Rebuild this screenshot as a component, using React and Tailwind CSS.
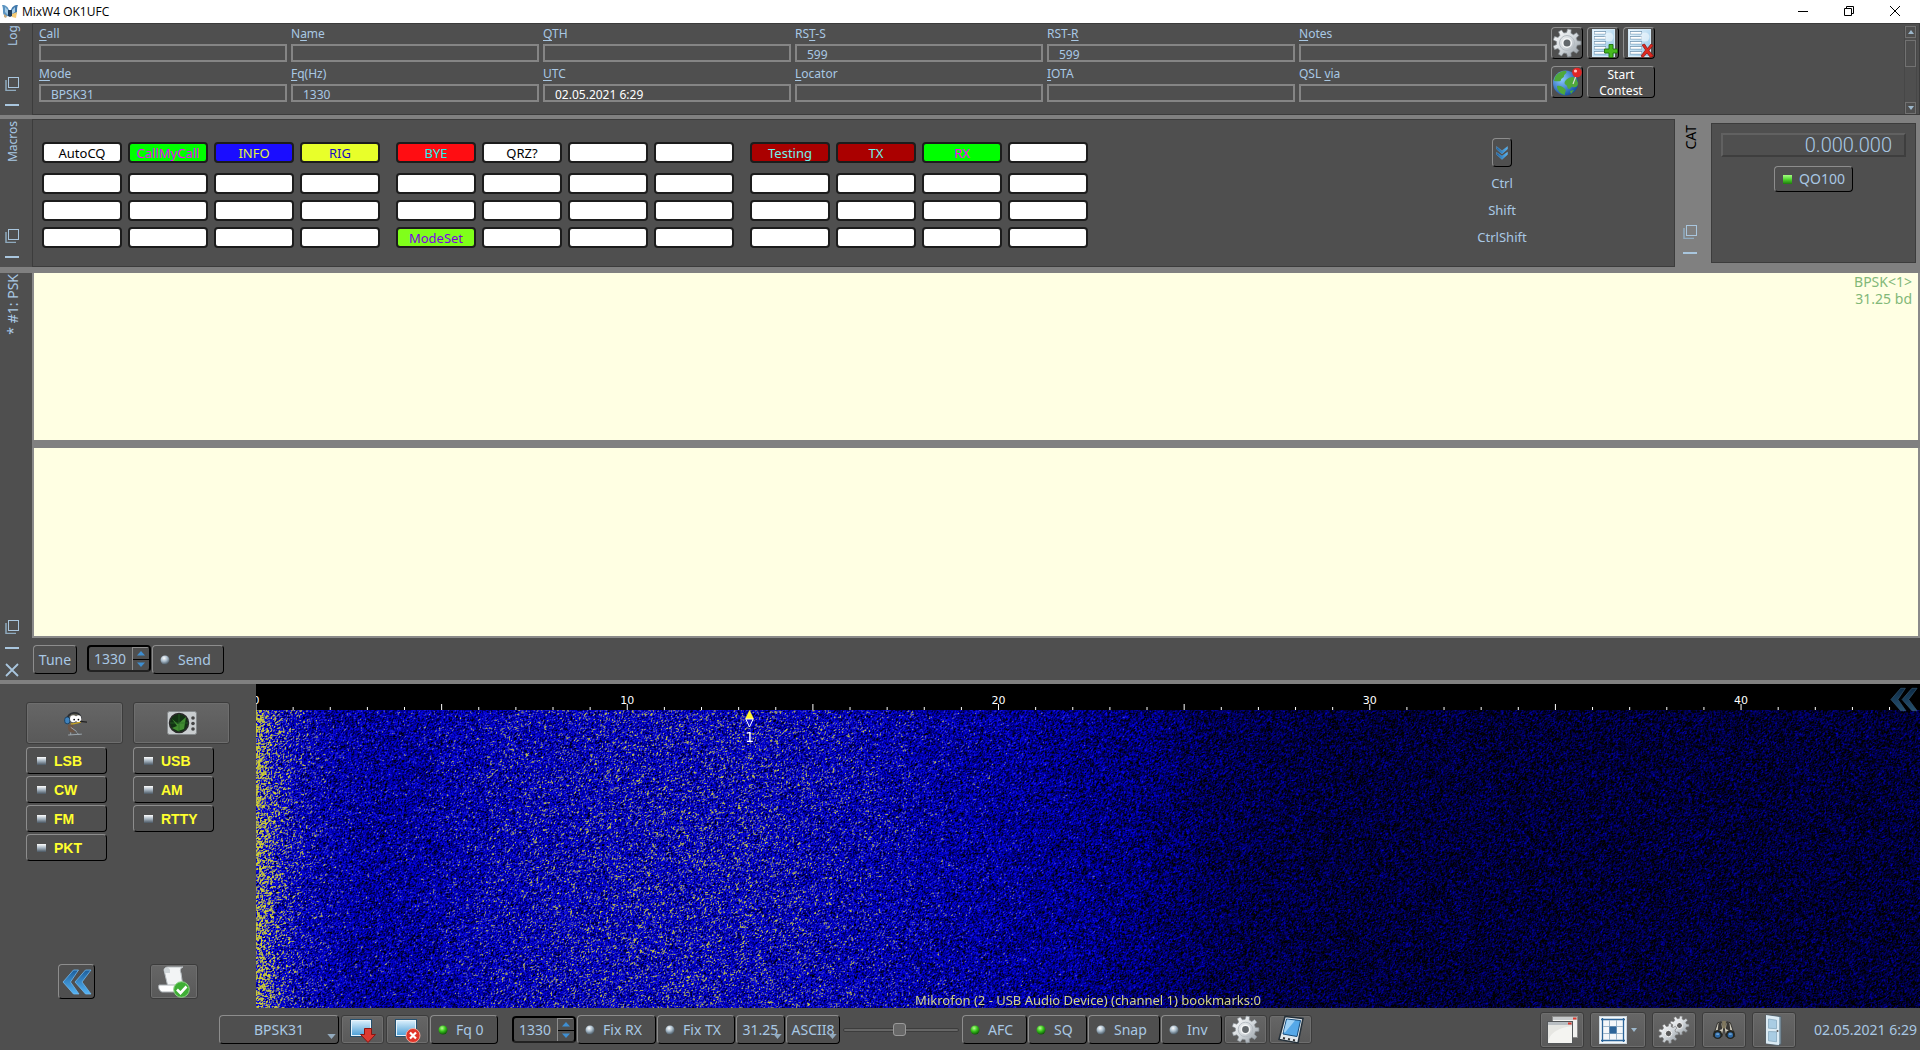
import React, { useEffect, useRef } from "react";

const raised =
  "rounded-[4px] border border-t-[#8d8d8d] border-l-[#8d8d8d] border-r-black border-b-black bg-[#4f4f4f]";
const flat =
  "rounded-[3px] border border-[#3c3c3c] bg-linear-to-b from-[#666666] to-[#595959] shadow-[inset_0_0_0_1px_#6e6e6e]";

/* ---------- icons ---------- */

function gearPath(cx, cy, outer, inner, teeth) {
  const pts = [];
  const step = (Math.PI * 2) / teeth;
  for (let i = 0; i < teeth; i++) {
    const a = i * step;
    [[-0.3, inner], [-0.18, outer], [0.18, outer], [0.3, inner]].forEach(([k, r]) => {
      const t = a + k * step;
      pts.push(`${(cx + r * Math.cos(t)).toFixed(2)} ${(cy + r * Math.sin(t)).toFixed(2)}`);
    });
  }
  return `M${pts.join("L")}Z`;
}

function Defs() {
  return (
    <svg className="absolute h-0 w-0" aria-hidden="true">
      <defs>
        <linearGradient id="steel" x1="0" y1="0" x2="1" y2="1">
          <stop offset="0" stopColor="#ffffff" />
          <stop offset="0.5" stopColor="#d5dade" />
          <stop offset="1" stopColor="#8c949b" />
        </linearGradient>
        <linearGradient id="sky" x1="0" y1="0" x2="0" y2="1">
          <stop offset="0" stopColor="#d9effc" />
          <stop offset="1" stopColor="#4c9fd6" />
        </linearGradient>
        <linearGradient id="sheet" x1="0" y1="0" x2="1" y2="1">
          <stop offset="0" stopColor="#eef8ff" />
          <stop offset="1" stopColor="#8fc4e6" />
        </linearGradient>
        <linearGradient id="blueArrow" x1="0" y1="0" x2="0" y2="1">
          <stop offset="0" stopColor="#1d5f9c" />
          <stop offset="1" stopColor="#55b4f5" />
        </linearGradient>
        <radialGradient id="globe" cx="0.35" cy="0.35" r="0.7">
          <stop offset="0" stopColor="#8ccbff" />
          <stop offset="1" stopColor="#134fa5" />
        </radialGradient>
        <radialGradient id="ledOn" cx="0.4" cy="0.3" r="0.7">
          <stop offset="0" stopColor="#b8ff90" />
          <stop offset="0.5" stopColor="#38c41c" />
          <stop offset="1" stopColor="#0f5a08" />
        </radialGradient>
        <radialGradient id="ledOff" cx="0.4" cy="0.3" r="0.7">
          <stop offset="0" stopColor="#ffffff" />
          <stop offset="0.5" stopColor="#a9bccb" />
          <stop offset="1" stopColor="#4b5964" />
        </radialGradient>
      </defs>
    </svg>
  );
}

function Gear({ className }) {
  return (
    <svg viewBox="0 0 30 30" className={className} aria-hidden="true">
      <path d={gearPath(15, 15, 14, 10.5, 9)} fill="url(#steel)" stroke="#8a9197" strokeWidth="0.7" />
      <circle cx="15" cy="15" r="7.5" fill="none" stroke="#b4bbc1" strokeWidth="1" />
      <circle cx="15" cy="15" r="4.3" fill="#63686c" stroke="#f5f7f8" strokeWidth="1.6" />
    </svg>
  );
}

function GearPair() {
  return (
    <svg viewBox="0 0 32 30" className="h-[30px] w-8" aria-hidden="true">
      <path d={gearPath(21.5, 10.5, 9.6, 7, 9)} fill="url(#steel)" stroke="#777" strokeWidth="0.6" />
      <circle cx="21.5" cy="10.5" r="3" fill="#5a5a5a" stroke="#fff" strokeWidth="1" />
      <path d={gearPath(10.5, 18.5, 10, 7.3, 9)} fill="url(#steel)" stroke="#777" strokeWidth="0.6" />
      <circle cx="10.5" cy="18.5" r="3.2" fill="#5a5a5a" stroke="#fff" strokeWidth="1" />
    </svg>
  );
}

function LogSheet({ mode }) {
  return (
    <svg viewBox="0 0 30 30" className="h-[30px] w-[30px]" aria-hidden="true">
      <rect x="4.5" y="1.5" width="22" height="27" fill="url(#sheet)" stroke="#d5e9f6" />
      {[3, 8, 13, 18, 23].map((y) => (
        <g key={y}>
          <rect x="6" y={y} width="12" height="3.4" fill="#6f93b0" />
          <rect x="6.5" y={y + 0.8} width="11" height="2" fill="#ffffff" />
        </g>
      ))}
      <circle cx="21" cy="9" r="4.500" fill="#ffffff" opacity="0.5" />
      {mode === "add" ? (
        <path d="M21 16.500h4v4.500h4.500v4H25v4.500h-4V25h-4.500v-4H21z" fill="#46b81e" stroke="#1f6f0c" strokeWidth="0.9" />
      ) : (
        <path d="M18 17l2.500-1 3 4.500 3.500-4.500 2 1.500-4 5 4.500 5.500-3 1.500-3.500-4.500-4 4.500-2-1.500 4.500-6z" fill="#dc2a20" stroke="#8d0f0a" strokeWidth="0.7" />
      )}
    </svg>
  );
}

function Globe() {
  return (
    <svg viewBox="0 0 30 30" className="h-[30px] w-[30px]" aria-hidden="true">
      <circle cx="13.500" cy="16" r="12.500" fill="url(#globe)" />
      <path d="M3 10c3-5 8-6.500 11-6 2 2-2 3-2 5s-3 2-3 4-4 1-7 1zM14 13c3-3 7-4 10-2l2 5c0 4-3 5-5 4s-2 2-4 2-1-3-3-4-2-3 0-5zM5 19c3-1 6 1 8 3s-1 4 0 6c-5-1-8-5-8-9zM18 24l4-1-3 4z" fill="#4fa83a" />
      <path d="M24 9l-3 8" stroke="#ddd" strokeWidth="1.2" />
      <circle cx="25" cy="5.500" r="4.800" fill="#e02626" />
      <circle cx="23.500" cy="4" r="1.600" fill="#ffc4c4" />
    </svg>
  );
}

function DoubleChevron({ dir = "left", className }) {
  return (
    <svg viewBox="0 0 30 26" className={`${className} ${dir === "down" ? "-rotate-90" : ""}`} aria-hidden="true">
      <path d="M11.500 1h5L8.500 13 17 25h-5.500L1 13z" fill="url(#blueArrow)" stroke="#6fb8ee" strokeWidth="0.8" />
      <path d="M23.500 1h5.500L20 13l9 12h-5.500L13 13z" fill="url(#blueArrow)" stroke="#6fb8ee" strokeWidth="0.8" />
    </svg>
  );
}

function FloatIcon() {
  return (
    <svg viewBox="0 0 14 14" className="h-3.5 w-3.5" fill="none" stroke="#a9c6de" aria-hidden="true">
      <rect x="3.5" y="0.5" width="10" height="10" />
      <path d="M1 3v10.500h10" strokeWidth="1.500" stroke="#8faabe" />
    </svg>
  );
}

function Duck() {
  return (
    <svg viewBox="0 0 28 32" className="h-[30px] w-6" aria-hidden="true">
      <path d="M5 12C5 3 20 1 21 11" fill="none" stroke="#2a2d31" strokeWidth="2.500" />
      <path d="M7 11c0-7 12-8 13-1z" fill="#5e5c50" />
      <rect x="2" y="9" width="6" height="8" rx="3" fill="#3f82bd" stroke="#143a5c" />
      <ellipse cx="12" cy="11" rx="3.800" ry="4" fill="#fff" />
      <ellipse cx="18" cy="11" rx="3.300" ry="4" fill="#fff" />
      <circle cx="13" cy="12" r="1" />
      <circle cx="18" cy="12" r="1" />
      <path d="M9 17c4 1 9-2 12-2" stroke="#c9a524" strokeWidth="1.500" fill="none" />
      <path d="M20 14l8 1" stroke="#222" strokeWidth="1.500" />
      <path d="M6 18c-1 3 0 7 3 9h6c-3-2-4-6-3-9z" fill="#6b5546" />
      <path d="M9 21l7 5M6 30l16-1M9 27v3M16 27l3 3" stroke="#9faab2" strokeWidth="1.100" fill="none" />
    </svg>
  );
}

function Scope() {
  return (
    <svg viewBox="0 0 30 24" className="h-6 w-[30px]" aria-hidden="true">
      <rect x="0.500" y="0.500" width="29" height="23" rx="2" fill="#c9cdcf" stroke="#85898b" />
      <ellipse cx="12" cy="12" rx="9.500" ry="9.500" fill="#123313" stroke="#2a2a2a" strokeWidth="1.500" />
      <path d="M5 8l6 5 8-7-2 12-6 2-6-3 5-2z" fill="#4ea33a" opacity="0.8" />
      <path d="M3 12h18M12 3v18" stroke="#2d6b2a" strokeWidth="0.700" />
      <circle cx="26" cy="7" r="1.800" fill="#444" />
      <circle cx="26" cy="12.500" r="1.800" fill="#444" />
      <circle cx="26" cy="18" r="1.800" fill="#444" />
    </svg>
  );
}

function ScriptOk() {
  return (
    <svg viewBox="0 0 32 32" className="h-8 w-8" aria-hidden="true">
      <path d="M6 4c0-2 2-3 4-3h15c-3 1-3 4-2 6l2 14H10z" fill="#f2f4f5" stroke="#b6bcc0" />
      <path d="M6 4c1-3 5-3 6 0v3H7z" fill="#cfd5d8" />
      <path d="M1 19h18c-2 2-2 5 1 7H4c-3-1-4-5-3-7z" fill="#fff" stroke="#a9afb3" />
      <circle cx="23.500" cy="23.500" r="7.800" fill="#3fae35" stroke="#8fd488" />
      <path d="M19 23.500l3.500 3.500 6-6.500" fill="none" stroke="#fff" strokeWidth="2.600" />
    </svg>
  );
}

function ScreenIcon({ kind }) {
  return (
    <svg viewBox="0 0 26 26" className="h-[26px] w-[26px]" aria-hidden="true">
      <rect x="1.500" y="3.500" width="19" height="15" fill="url(#sky)" stroke="#e8f3fa" />
      <rect x="0.500" y="2.500" width="21" height="17" fill="none" stroke="#24506f" />
      {kind === "down" ? (
        <path d="M14.500 11.500h7v6h4L18 25.500l-7.500-8h4z" fill="#dd3b32" stroke="#8c1410" />
      ) : (
        <>
          <circle cx="18" cy="18.500" r="7" fill="#e0352a" stroke="#ffb9a8" strokeWidth="0.800" />
          <path d="M15 15.500l6 6M21 15.500l-6 6" stroke="#fff" strokeWidth="2.200" />
        </>
      )}
    </svg>
  );
}

function Pda() {
  return (
    <svg viewBox="0 0 28 30" className="h-[30px] w-7" aria-hidden="true">
      <path d="M8 1.500l18 2-5 24.500-19-3.500z" fill="#e1e7eb" stroke="#24303a" strokeWidth="1.500" />
      <path d="M9.500 4l14 1.500-3.500 16-14-2.500z" fill="#56a8e8" stroke="#164b7a" />
      <path d="M10 4.500l8 1-10 12-1.500-.3z" fill="#bfe3fb" opacity="0.700" />
      <path d="M6 23l2 .4M11 24l2 .4M16 25l2 .4" stroke="#333" strokeWidth="2" />
    </svg>
  );
}

function Windows() {
  return (
    <svg viewBox="0 0 32 30" className="h-[30px] w-8" aria-hidden="true">
      <rect x="6.500" y="1.500" width="25" height="21" fill="#f1f1ef" stroke="#8b8b8b" />
      <rect x="7" y="2" width="24" height="3" fill="#c7cacc" />
      <rect x="27" y="2.500" width="3.500" height="2" fill="#dd3b2f" />
      <rect x="1.500" y="6.500" width="25" height="22" fill="#f4f4f1" stroke="#55585a" />
      <rect x="2" y="7" width="24" height="3" fill="#b9bec2" />
      <rect x="22" y="7.500" width="3.500" height="2" fill="#dd3b2f" />
      <path d="M2 28c1-9 8-15 24-17V10H2z" fill="#dcdcd8" opacity="0.600" />
    </svg>
  );
}

function GridIcon() {
  return (
    <svg viewBox="0 0 28 28" className="h-7 w-7" aria-hidden="true">
      <rect x="0.500" y="0.500" width="27" height="27" fill="#f3f7fa" stroke="#cdd7df" />
      <path d="M3.500 2v24M24.500 2v24M2 3.500h24M2 24.500h24" stroke="#2b6499" strokeWidth="1.300" />
      <path d="M10.500 4v20M17.500 4v20M4 10.500h20M4 17.500h20" stroke="#9db6ca" />
      <rect x="10.500" y="10.500" width="7" height="7" fill="#2b6499" />
    </svg>
  );
}

function Binoculars() {
  return (
    <svg viewBox="0 0 26 22" className="h-5 w-6" aria-hidden="true">
      <path d="M6 3l4-1 3 6-2 10H1z" fill="#cdc9bb" stroke="#2c2b28" />
      <path d="M20 3l-4-1-3 6 2 10h10z" fill="#cdc9bb" stroke="#2c2b28" />
      <path d="M7 3l3-1 1 8-5 2zM19 3l-3-1-1 8 5 2z" fill="#3a3835" />
      <rect x="11" y="1" width="4" height="8" fill="#81785f" />
      <circle cx="6" cy="16" r="5" fill="#23241f" />
      <circle cx="20" cy="16" r="5" fill="#23241f" />
      <circle cx="6" cy="16.500" r="3" fill="#2f6aa6" />
      <circle cx="20" cy="16.500" r="3" fill="#2f6aa6" />
      <path d="M4.500 15.500h3M18.500 15.500h3" stroke="#a5d3f5" />
    </svg>
  );
}

function Door() {
  return (
    <svg viewBox="0 0 20 32" className="h-8 w-5" aria-hidden="true">
      <path d="M2 1l15 1.500V30l-3 1.500L2 29.500z" fill="#8fa9b9" stroke="#55636d" />
      <path d="M2 1l13 2v28L2 29.500z" fill="#dcebf4" />
      <path d="M4.500 5l8 1.200v8.500l-8-.5zM4.500 17.500l8 .3v10l-8-1z" fill="#a9cce3" stroke="#7fa2b8" strokeWidth="0.700" />
      <circle cx="13.500" cy="17" r="1" fill="#555" />
    </svg>
  );
}

function Logo() {
  return (
    <svg viewBox="0 0 16 16" className="h-4 w-4" aria-hidden="true">
      <path d="M0 1c4 0 6 2 7 5l-1 6c-3 1-5-1-5-4 0-2 0-5-1-7z" fill="#5b93c0" />
      <path d="M16 1c-4 0-6 2-7 5l1 5c3 1 5-1 5-3 0-3 0-5 1-7z" fill="#3f78ab" />
      <path d="M3 3l3 3v5L3 8zM13 3l-3 3v4l3-2z" fill="#a5cbe6" />
      <path d="M6 6h4v6l-2 1-2-1z" fill="#1f3d5c" />
      <path d="M10 10l5-2-1 6-4-1z" fill="#f6cb74" />
      <path d="M2 10l3 2-1 2-2-1z" fill="#c9ab7d" />
    </svg>
  );
}

/* ---------- shared controls ---------- */

function Led({ on }) {
  return (
    <svg viewBox="0 0 10 10" className="h-2.5 w-2.5 shrink-0" aria-hidden="true">
      <circle cx="5" cy="5" r="4.500" fill={on ? "url(#ledOn)" : "url(#ledOff)"} />
    </svg>
  );
}

function LedButton({ on = false, className, children }) {
  return (
    <button type="button" aria-pressed={on} className={`${raised} flex h-[29px] items-center gap-2 pl-[7px] text-sm ${className}`}>
      <Led on={on} />
      <span className="whitespace-nowrap">{children}</span>
    </button>
  );
}

function IconButton({ label, className, children }) {
  return (
    <button type="button" aria-label={label} className={`${flat} flex shrink-0 items-center justify-center ${className}`}>
      {children}
    </button>
  );
}

function Spin({ label }) {
  return (
    <div className="flex h-[27px] w-16 shrink-0 overflow-hidden rounded-[4px] border-2 border-black border-b-[#222222] bg-[#4f4f4f]">
      <input aria-label={label} defaultValue="1330" className="w-0 grow bg-transparent pl-[5px] text-sm outline-none" />
      <div className="flex w-[17px] flex-col border-l border-[#8d8d8d]">
        <button type="button" aria-label={`${label} up`} className="flex flex-1 items-center justify-center border-t border-[#8d8d8d]">
          <svg viewBox="0 0 8 5" className="h-[5px] w-2"><path d="M4 0l4 4.500H0z" fill="#3f8fd2" /></svg>
        </button>
        <button type="button" aria-label={`${label} down`} className="flex flex-1 items-center justify-center border-t border-black">
          <svg viewBox="0 0 8 5" className="h-[5px] w-2"><path d="M4 5l4-4.500H0z" fill="#3f8fd2" /></svg>
        </button>
      </div>
    </div>
  );
}

function Arrow() {
  return <svg viewBox="0 0 10 6" className="pointer-events-none absolute right-0.5 bottom-1 h-[5px] w-[9px]"><path d="M0 0h10L5 6z" fill="#93aabd" /></svg>;
}

function ToolSelect({ label, value, className }) {
  return (
    <div className={`${raised} relative h-[29px] shrink-0 ${className}`}>
      <select aria-label={label} className="h-full w-full appearance-none bg-transparent text-center text-sm outline-none [text-align-last:center]">
        <option>{value}</option>
      </select>
      <Arrow />
    </div>
  );
}

function DockBar({ title, big = false, close = false, className = "w-8 pl-[5px]" }) {
  return (
    <div className={`flex shrink-0 flex-col items-start ${className}`}>
      <span className={`rotate-180 leading-4 whitespace-nowrap [writing-mode:vertical-rl] ${big ? "text-sm" : "text-xs"}`}>{title}</span>
      <button type="button" aria-label={`Float ${title}`} className="mt-auto"><FloatIcon /></button>
      <button type="button" aria-label={`Minimize ${title}`} className="mt-[7px] flex h-3.5 w-3.5 items-center">
        <span className="h-0.5 w-full bg-[#a9c6de]" />
      </button>
      {close && (
        <button type="button" aria-label={`Close ${title}`} className="mt-2">
          <svg viewBox="0 0 14 14" className="h-3.5 w-3.5" stroke="#a9c6de" strokeWidth="1.800"><path d="M1 1l12 12M13 1L1 13" /></svg>
        </button>
      )}
    </div>
  );
}

/* ---------- log ---------- */

const logFields = [
  ["", "C", "all", ""],
  ["N", "a", "me", ""],
  ["", "Q", "TH", ""],
  ["RS", "T", "-S", "599"],
  ["RST-", "R", "", "599"],
  ["", "N", "otes", ""],
  ["", "M", "ode", "BPSK31"],
  ["", "F", "q(Hz)", "1330"],
  ["", "U", "TC", "02.05.2021 6:29"],
  ["", "L", "ocator", ""],
  ["", "I", "OTA", ""],
  ["QSL ", "v", "ia", ""],
];

function LogPanel() {
  return (
    <section className="flex h-[92px] shrink-0">
      <DockBar title="Log" className="w-8 pt-0.5 pb-[3px] pl-[5px]" />
      <div className="flex min-w-0 grow border border-[#3c3c3c] pt-0.5 pl-1.5">
        <div className="grid min-w-0 grow grid-cols-6 content-start gap-x-1 gap-y-1">
          {logFields.map(([pre, key, post, value], i) => (
            <label key={i} className="block text-xs leading-4">
              <span className="block h-[18px]">{pre}<u className="underline-offset-2">{key}</u>{post}</span>
              <input
                defaultValue={value}
                className={`block h-[18px] w-full border-2 border-[#858585] bg-transparent pt-0.5 pl-2.5 leading-3 outline-none ${i === 8 ? "text-white" : ""}`}
              />
            </label>
          ))}
        </div>
        <div className="ml-1 grid w-[104px] shrink-0 grid-cols-3 content-start gap-x-1 gap-y-[7px] pt-px">
          <button type="button" aria-label="Log settings" className={`${raised} flex h-8 items-center justify-center`}><Gear className="h-[30px] w-[30px]" /></button>
          <button type="button" aria-label="Add record" className={`${raised} flex h-8 items-center justify-center`}><LogSheet mode="add" /></button>
          <button type="button" aria-label="Clear record" className={`${raised} flex h-8 items-center justify-center`}><LogSheet mode="clear" /></button>
          <button type="button" aria-label="Map" className={`${raised} flex h-8 items-center justify-center`}><Globe /></button>
          <button type="button" className={`${raised} col-span-2 h-8 text-xs leading-4 text-white`}>Start<br />Contest</button>
        </div>
        <div className="flex w-[264px] shrink-0 justify-end">
          <div className="mr-0.5 flex w-[13px] flex-col border-x border-[#474747]">
            <button type="button" aria-label="Scroll up" className="flex h-3 items-center justify-center border border-[#727272]">
              <svg viewBox="0 0 6 4" className="h-1 w-1.5"><path d="M0 4h6L3 0z" fill="#9db8cc" /></svg>
            </button>
            <div className="mt-0.5 h-[27px] border border-[#727272]" />
            <button type="button" aria-label="Scroll down" className="mt-auto flex h-3 items-center justify-center border border-[#727272]">
              <svg viewBox="0 0 6 4" className="h-1 w-1.5"><path d="M0 0h6L3 4z" fill="#9db8cc" /></svg>
            </button>
          </div>
        </div>
      </div>
    </section>
  );
}

/* ---------- macros ---------- */

const macroStyles = {
  AutoCQ: "bg-white text-black",
  CallMyCall: "bg-[#00ff00] text-[#f000ff]",
  INFO: "bg-[#1a0dff] text-[#e4f23c]",
  RIG: "bg-[#e8ff2a] text-[#1a0dc0]",
  BYE: "bg-[#ff0d12] text-[#20f4f0]",
  "QRZ?": "bg-white text-black",
  Testing: "bg-[#aa0000] text-[#6ff2ee]",
  TX: "bg-[#aa0000] text-[#6ff2ee]",
  RX: "bg-[#00ff00] text-[#ff00ff]",
  ModeSet: "bg-[#80ff1a] text-[#7a00e6]",
};

const macroRows = [
  ["AutoCQ", "CallMyCall", "INFO", "RIG", "BYE", "QRZ?", "", "", "Testing", "TX", "RX", ""],
  Array(12).fill(""),
  Array(12).fill(""),
  ["", "", "", "", "ModeSet", "", "", "", "", "", "", ""],
];

function MacroPanel() {
  return (
    <div className="flex min-w-0 grow border border-[#3c3c3c] bg-[#4f4f4f]">
      <div className="flex flex-col gap-1.5 pt-[22px] pl-[9px]">
        {macroRows.map((row, r) => (
          <div key={r} className={`flex gap-4 ${r === 0 ? "mb-1" : ""}`}>
            {[0, 4, 8].map((start) => (
              <div key={start} className="flex gap-1.5">
                {row.slice(start, start + 4).map((name, i) => (
                  <button
                    key={i}
                    type="button"
                    aria-label={name || `Macro ${r * 12 + start + i + 1}`}
                    className={`h-[21px] w-20 rounded-[4px] border-2 border-[#1c1c1c] text-[13px] leading-4 ${macroStyles[name] || "bg-white"}`}
                  >
                    {name}
                  </button>
                ))}
              </div>
            ))}
          </div>
        ))}
      </div>
      <div className="mr-[147px] ml-auto flex w-[50px] flex-col items-center pt-[18px] text-[13px]">
        <button type="button" aria-label="Expand macros" className={`${raised} flex h-[29px] w-5 items-center justify-center`}>
          <DoubleChevron dir="down" className="h-3 w-4" />
        </button>
        <span className="mt-[3px] leading-[27px]">Ctrl</span>
        <span className="leading-[27px]">Shift</span>
        <span className="leading-[27px]">CtrlShift</span>
      </div>
    </div>
  );
}

function CatPanel() {
  return (
    <div className="flex w-[245px] shrink-0 py-1 pr-1">
      <DockBar title="CAT" big className="w-9 pt-0.5 pb-[3px] pl-2 [&>span]:text-black" />
      <div className="flex grow flex-col items-center border border-[#3c3c3c] bg-[#4f4f4f] px-[9px] pt-[9px]">
        <output className="h-6 w-full border-2 border-[#3e3e3e] border-t-[#616161] border-l-[#616161] pr-3 text-right font-[Roboto] text-xl leading-5 font-light">0.000.000</output>
        <button type="button" aria-pressed="true" className={`${raised} mt-[9px] flex h-[26px] items-center gap-[7px] pr-[7px] pl-2 text-sm`}>
          <span className="h-[9px] w-[9px] bg-linear-to-b from-[#a4ff80] via-[#4ed42c] to-[#1f7a10]" />
          QO100
        </button>
      </div>
    </div>
  );
}

/* ---------- channel ---------- */

function ChannelPanel() {
  return (
    <section className="flex shrink-0">
      <DockBar title="* #1: PSK" big close className="w-8 pt-px pb-[3px] pl-[5px]" />
      <div className="min-w-0 grow">
        <div className="relative border-x-2 border-[#8a8a8a]">
          <textarea aria-label="Received text" className="block h-[167px] w-full resize-none bg-[#ffffe3] p-1 text-sm text-black outline-none" />
          <div className="pointer-events-none absolute top-0 right-1.5 text-right text-sm leading-[17px] text-[#82b878]">
            <div>BPSK&lt;1&gt;</div>
            <div>31.25 bd</div>
          </div>
        </div>
        <div className="h-2 bg-[#808080]" />
        <div className="border-x-2 border-b-2 border-[#8a8a8a]">
          <textarea aria-label="Transmit text" className="block h-[188px] w-full resize-none bg-[#ffffe3] p-1 text-sm text-black outline-none" />
        </div>
        <div className="flex pt-[7px] pb-1.5 pl-px">
          <button type="button" className={`${raised} mr-2.5 h-[29px] w-11 text-sm`}>Tune</button>
          <Spin label="Channel frequency" />
          <LedButton className="ml-px w-[72px]">Send</LedButton>
        </div>
      </div>
    </section>
  );
}

/* ---------- waterfall ---------- */

const SPAN_HZ = 44.82;

function lerp(stops, x) {
  for (let i = 1; i < stops.length; i++) {
    if (x <= stops[i][0]) {
      const [x0, y0] = stops[i - 1];
      const [x1, y1] = stops[i];
      return y0 + ((y1 - y0) * (x - x0)) / (x1 - x0);
    }
  }
  return stops[stops.length - 1][1];
}

const level = [
  [0, 0.86], [0.006, 0.72], [0.013, 0.6], [0.03, 0.48], [0.06, 0.39], [0.1, 0.4], [0.15, 0.48],
  [0.22, 0.52], [0.3, 0.52], [0.36, 0.47], [0.42, 0.4], [0.47, 0.35], [0.53, 0.28], [0.58, 0.2],
  [0.65, 0.15], [1, 0.14],
];
const palette = [[0, [0, 0, 0]], [0.2, [0, 0, 75]], [0.5, [0, 0, 205]], [0.62, [15, 15, 220]], [0.75, [100, 100, 135]], [0.9, [170, 170, 85]], [1.1, [205, 205, 50]]];
const channels = [0, 1, 2].map((c) => palette.map(([v, rgb]) => [v, rgb[c]]));

function paint(canvas) {
  const w = canvas.clientWidth;
  const h = canvas.clientHeight;
  if (!w || !h) return;
  canvas.width = w;
  canvas.height = h;
  const ctx = canvas.getContext("2d");
  const img = ctx.createImageData(w, h);
  const lut = Array.from({ length: 221 }, (_, i) => channels.map((c) => lerp(c, i / 200)));
  const mus = Array.from({ length: w }, (_, x) => lerp(level, x / w));
  const above = new Float32Array(w);
  let seed = 20210502;
  const rnd = () => {
    seed = (seed * 1664525 + 1013904223) >>> 0;
    return seed / 4294967296;
  };
  for (let y = 0; y < h; y++) {
    let prev = 0;
    for (let x = 0; x < w; x++) {
      const g = (rnd() + rnd() + rnd() - 1.5) * 2;
      const n = 0.72 * g + 0.45 * prev + 0.45 * above[x];
      prev = g;
      above[x] = g;
      const mu = mus[x];
      const v = mu + n * (0.07 + 0.22 * mu);
      const c = lut[Math.max(0, Math.min(220, Math.round(v * 200)))];
      const p = (y * w + x) * 4;
      img.data[p] = c[0];
      img.data[p + 1] = c[1];
      img.data[p + 2] = c[2];
      img.data[p + 3] = 255;
    }
  }
  ctx.putImageData(img, 0, 0);
}

function Waterfall() {
  const ref = useRef(null);
  useEffect(() => {
    const canvas = ref.current;
    paint(canvas);
    const ro = new ResizeObserver(() => paint(canvas));
    ro.observe(canvas);
    return () => ro.disconnect();
  }, []);
  const ticks = Array.from({ length: 45 }, (_, i) => i);
  return (
    <div className="relative flex min-w-0 grow flex-col bg-black">
      <svg className="h-[26px] w-full shrink-0" role="img" aria-label="Frequency scale">
        {ticks.map((t) => {
          const x = `${(t / SPAN_HZ) * 100}%`;
          return <line key={t} x1={x} x2={x} y1={t % 5 ? 23 : 20} y2="26" stroke="#fff" />;
        })}
        {[0, 10, 20, 30, 40].map((t) => (
          <text key={t} x={`${(t / SPAN_HZ) * 100}%`} y="20" textAnchor="middle" fill="#fff" fontSize="11" fontFamily="DejaVu Sans">{t}</text>
        ))}
      </svg>
      <div className="relative min-h-[298px] grow">
        <canvas ref={ref} className="absolute inset-0 h-full w-full" />
        <div className="absolute top-0 left-[29.67%] flex w-4 -translate-x-1/2 flex-col items-center text-white">
          <svg viewBox="0 0 9 18" className="h-[18px] w-[9px]">
            <path d="M4.500 0L9 9H0z" fill="#fff22e" />
            <path d="M0.800 9h7.400L4.500 17z" fill="#1616c8" stroke="#fff" />
          </svg>
          <span className="mt-[3px] font-['DejaVu_Sans'] text-sm leading-3">1</span>
        </div>
        <div className="absolute inset-x-0 bottom-0 text-center text-[13px] leading-4 text-[#d4d488]">
          Mikrofon (2 - USB Audio Device) (channel 1) bookmarks:0
        </div>
      </div>
      <button type="button" aria-label="Collapse spectrum" className="absolute top-0.5 right-0.5 opacity-45">
        <DoubleChevron className="h-[27px] w-7" />
      </button>
    </div>
  );
}

function ModeButton({ children }) {
  return (
    <button type="button" className={`${raised} flex h-[27px] w-[81px] items-center gap-2 pl-2.5 font-['Liberation_Sans'] text-sm font-bold text-[#ffff2e]`}>
      <span className="h-2 w-[9px] bg-linear-to-b from-[#ffffff] via-[#a5b3bf] to-[#4a5661]" />
      {children}
    </button>
  );
}

function RigPanel() {
  return (
    <div className="flex w-64 shrink-0 flex-col pt-[18px] pb-[9px] pl-[26px]">
      <div className="flex gap-2.5">
        {[["Voice", <Duck key="d" />, ["LSB", "CW", "FM", "PKT"]], ["Spectrum", <Scope key="s" />, ["USB", "AM", "RTTY"]]].map(([label, icon, modes]) => (
          <div key={label} className="flex w-[97px] flex-col gap-0.5">
            <IconButton label={label} className="mb-px h-[42px] w-full">{icon}</IconButton>
            {modes.map((m) => <ModeButton key={m}>{m}</ModeButton>)}
          </div>
        ))}
      </div>
      <div className="mt-auto flex gap-[55px] pl-8">
        <button type="button" aria-label="Hide panel" className={`${raised} flex h-[35px] w-[37px] items-center justify-center`}>
          <DoubleChevron className="h-7 w-[30px]" />
        </button>
        <IconButton label="Apply script" className="h-[35px] w-12"><ScriptOk /></IconButton>
      </div>
    </div>
  );
}

/* ---------- bottom toolbar ---------- */

function Toolbar() {
  return (
    <footer className="flex h-[42px] shrink-0 items-center pt-px pl-[219px]">
      <ToolSelect label="Mode" value="BPSK31" className="w-[120px]" />
      <IconButton label="Receive screen" className="ml-0.5 h-[29px] w-[43px]"><ScreenIcon kind="down" /></IconButton>
      <IconButton label="Close screen" className="ml-0.5 h-[29px] w-[43px]"><ScreenIcon kind="close" /></IconButton>
      <LedButton on className="ml-px w-[68px]">Fq 0</LedButton>
      <div className="ml-3.5 shrink-0"><Spin label="Frequency" /></div>
      <LedButton className="ml-px w-[79px]">Fix RX</LedButton>
      <LedButton className="ml-px w-[78px]">Fix TX</LedButton>
      <ToolSelect label="Speed" value="31.25" className="ml-px w-[49px]" />
      <ToolSelect label="Charset" value="ASCII8" className="ml-px w-[54px]" />
      <input
        type="range"
        aria-label="Squelch level"
        defaultValue="49"
        className="mx-[3px] h-4 w-[116px] appearance-none bg-transparent [&::-webkit-slider-runnable-track]:h-1 [&::-webkit-slider-runnable-track]:rounded-sm [&::-webkit-slider-runnable-track]:border [&::-webkit-slider-runnable-track]:border-[#3c3c3c] [&::-webkit-slider-runnable-track]:bg-[#666666] [&::-webkit-slider-thumb]:-mt-[6px] [&::-webkit-slider-thumb]:h-[13px] [&::-webkit-slider-thumb]:w-[13px] [&::-webkit-slider-thumb]:appearance-none [&::-webkit-slider-thumb]:rounded-[3px] [&::-webkit-slider-thumb]:border [&::-webkit-slider-thumb]:border-[#9a9a9a] [&::-webkit-slider-thumb]:bg-[#686868]"
      />
      <LedButton on className="w-[65px]">AFC</LedButton>
      <LedButton on className="ml-px w-[59px]">SQ</LedButton>
      <LedButton className="ml-px w-[72px]">Snap</LedButton>
      <LedButton className="ml-px w-[61px]">Inv</LedButton>
      <IconButton label="Settings" className="ml-0.5 h-[29px] w-[43px]"><Gear className="h-[29px] w-[29px]" /></IconButton>
      <IconButton label="Device" className="ml-0.5 h-[29px] w-[43px]"><Pda /></IconButton>
      <div className="ml-auto flex items-center gap-1.5">
        <IconButton label="Windows" className="h-9 w-11"><Windows /></IconButton>
        <IconButton label="Layout" className="h-9 w-14 gap-1">
          <GridIcon />
          <svg viewBox="0 0 6 4" className="h-1 w-1.5"><path d="M0 0h6L3 4z" fill="#9db8cc" /></svg>
        </IconButton>
        <IconButton label="Configuration" className="h-9 w-11"><GearPair /></IconButton>
        <IconButton label="Search" className="h-9 w-11"><Binoculars /></IconButton>
        <IconButton label="Exit" className="h-9 w-11"><Door /></IconButton>
        <time className="ml-3 w-[106px] text-sm whitespace-nowrap">02.05.2021 6:29</time>
      </div>
    </footer>
  );
}

export default function App() {
  return (
    <div className="flex min-h-screen flex-col bg-[#4f4f4f] font-['Noto_Sans',sans-serif] text-[#a9c8e4]">
      <Defs />
      <header className="flex h-[23px] shrink-0 items-center bg-white pl-0.5 font-['Open_Sans'] text-xs text-black">
        <Logo />
        <h1 className="ml-1">MixW4 OK1UFC</h1>
        <div className="mr-0.5 ml-auto flex pb-0.5">
          <button type="button" aria-label="Minimize" className="flex w-[46px] justify-center">
            <svg viewBox="0 0 10 10" className="h-2.5 w-2.5" stroke="#000"><path d="M0 5.500h10" /></svg>
          </button>
          <button type="button" aria-label="Restore" className="flex w-[46px] justify-center">
            <svg viewBox="0 0 10 10" className="h-2.5 w-2.5" stroke="#000" fill="none"><path d="M0.500 2.500h7v7h-7zM2.500 2.500v-2h7v7h-2" /></svg>
          </button>
          <button type="button" aria-label="Close" className="flex w-[46px] justify-center">
            <svg viewBox="0 0 10 10" className="h-2.5 w-2.5" stroke="#000"><path d="M0 0l10 10M10 0L0 10" /></svg>
          </button>
        </div>
      </header>
      <LogPanel />
      <div className="h-1 shrink-0 bg-[#808080]" />
      <section className="flex h-[148px] shrink-0 bg-[#808080]">
        <DockBar title="Macros" className="w-8 bg-[#4f4f4f] pt-0.5 pb-[3px] pl-[5px]" />
        <MacroPanel />
        <CatPanel />
      </section>
      <div className="h-1.5 shrink-0 bg-[#808080]" />
      <ChannelPanel />
      <div className="h-1 shrink-0 bg-[#808080]" />
      <main className="flex grow">
        <RigPanel />
        <Waterfall />
      </main>
      <Toolbar />
    </div>
  );
}
